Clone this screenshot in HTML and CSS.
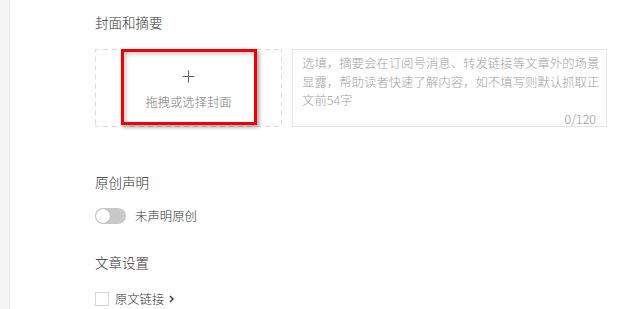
FILE: index.html
```html
<!DOCTYPE html>
<html lang="zh-CN">
<head>
    <meta charset="UTF-8">
    <meta name="viewport" content="width=device-width, initial-scale=1.0">
    <title>封面和摘要</title>
    <link rel="stylesheet" href="styles.css">
</head>
<body>
    <div class="page">
        <aside class="side-strip"></aside>

        <main class="editor">
            <h2 class="section-title">封面和摘要</h2>

            <div class="cover-row">
                <div class="cover-picker">
                    <div class="cover-inner">
                        <span class="cover-plus">
                            <svg width="13" height="13" viewBox="0 0 13 13">
                                <path d="M6.5 0.5V12.5M0.5 6.5H12.5" stroke="#666" stroke-width="1.1" fill="none"/>
                            </svg>
                        </span>
                        <span class="cover-text">拖拽或选择封面</span>
                    </div>
                    <!-- annotation frame over the picker -->
                    <div class="highlight-frame"></div>
                </div>

                <div class="digest-box">
                    <p class="digest-placeholder">选填，摘要会在订阅号消息、转发链接等文章外的场景显露，帮助读者快速了解内容，如不填写则默认抓取正文前54字</p>
                    <span class="digest-count">0/120</span>
                </div>
            </div>

            <h2 class="section-title title-original">原创声明</h2>

            <div class="switch-row">
                <span class="switch"><span class="switch-knob"></span></span>
                <span class="switch-label">未声明原创</span>
            </div>

            <h2 class="section-title title-settings">文章设置</h2>

            <div class="check-row">
                <span class="checkbox"></span>
                <span class="check-label">原文链接</span>
                <svg class="chevron" width="5" height="8" viewBox="0 0 5 8">
                    <path d="M1 1L4 4L1 7" stroke="#333" stroke-width="1.4" fill="none"/>
                </svg>
            </div>
        </main>
    </div>
</body>
</html>
```

FILE: styles.css
```css
:root {
    --title-color: #333333;
    --text-color: #333333;
    --muted-color: #a3a3a3;
    --line-color: #e6e6e6;
    --dash-color: #dcdcdc;
    --strip-color: #f5f5f5;
}

* {
    box-sizing: border-box;
}

body {
    margin: 0;
    background-color: #ffffff;
    font-family: "Noto Sans CJK SC", "Noto Sans", sans-serif;
    font-weight: 300;
    color: var(--text-color);
    overflow: hidden;
}

.page {
    display: flex;
    height: 309px;
}

.side-strip {
    width: 10px;
    flex-shrink: 0;
    background-color: var(--strip-color);
    border-right: 1px solid #ececec;
}

.editor {
    flex: 1;
    padding: 12px 0 0 85px;
}

.section-title {
    margin: 0;
    font-size: 13.5px;
    font-weight: 300;
    line-height: 20px;
    color: var(--title-color);
}

.title-original {
    margin-top: 45px;
}

.title-settings {
    margin-top: 28px;
}

/* cover + digest */
.cover-row {
    display: flex;
    gap: 10px;
    margin-top: 17px;
    height: 78px;
}

.cover-picker {
    position: relative;
    width: 187px;
    height: 78px;
    background:
        linear-gradient(to right, var(--dash-color) 60%, transparent 0) top / 9px 1px repeat-x,
        linear-gradient(to right, var(--dash-color) 60%, transparent 0) bottom / 9px 1px repeat-x,
        linear-gradient(to bottom, var(--dash-color) 60%, transparent 0) left / 1px 9px repeat-y,
        linear-gradient(to bottom, var(--dash-color) 60%, transparent 0) right / 1px 9px repeat-y;
}

.cover-inner {
    height: 100%;
    display: flex;
    flex-direction: column;
    align-items: center;
    justify-content: center;
    padding-top: 4px;
}

.cover-plus {
    display: flex;
    height: 13px;
    margin-bottom: 11px;
}

.cover-text {
    font-size: 12.3px;
    line-height: 16px;
    color: #7a7a7a;
}

.highlight-frame {
    position: absolute;
    left: 26px;
    top: 0;
    width: 136px;
    height: 76px;
    border: 3px solid #f00000;
    box-shadow: 2px 2px 4px rgba(0, 0, 0, 0.4), inset 2px 2px 4px rgba(0, 0, 0, 0.22);
}

.digest-box {
    width: 315px;
    height: 78px;
    border: 1px solid var(--line-color);
    padding: 4px 6px 2px 9px;
    display: flex;
    flex-direction: column;
}

.digest-placeholder {
    margin: 0;
    font-size: 12.4px;
    line-height: 18.5px;
    color: var(--muted-color);
}

.digest-count {
    margin-top: auto;
    align-self: flex-end;
    padding-right: 4px;
    font-size: 12.4px;
    line-height: 18px;
    color: #999999;
}

/* original declaration */
.switch-row {
    display: flex;
    align-items: center;
    margin-top: 16px;
    height: 16px;
}

.switch {
    display: flex;
    align-items: center;
    width: 31px;
    height: 16px;
    padding: 1px;
    border-radius: 8px;
    background-color: #c9c9c9;
}

.switch-knob {
    width: 14px;
    height: 14px;
    border-radius: 50%;
    background-color: #ffffff;
    box-shadow: 0 0 1px rgba(0, 0, 0, 0.3);
}

.switch-label {
    margin-left: 9px;
    font-size: 12.4px;
    color: var(--text-color);
}

/* article settings */
.check-row {
    display: flex;
    align-items: center;
    margin-top: 20px;
    height: 14px;
}

.checkbox {
    width: 14px;
    height: 14px;
    border: 1px solid #d6d6d6;
    background-color: #ffffff;
}

.check-label {
    margin-left: 6px;
    font-size: 12.3px;
    color: var(--text-color);
}

.chevron {
    margin-left: 5px;
}
```
